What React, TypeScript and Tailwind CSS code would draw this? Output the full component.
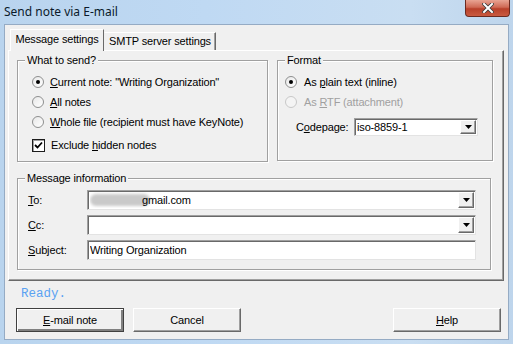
import React from "react";

function Radio({ checked, disabled }: { checked?: boolean; disabled?: boolean }) {
  return (
    <span
      className={`relative inline-flex h-[12px] w-[12px] shrink-0 items-center justify-center rounded-full border ${
        disabled ? "border-[#c8c8c8] bg-[#f4f4f4]" : "border-[#8e8f8f] bg-[linear-gradient(135deg,#e8e8e8,#ffffff)]"
      }`}
    >
      {checked && <span className="h-[4px] w-[4px] rounded-full bg-black" />}
    </span>
  );
}

function Check() {
  return (
    <span className="inline-flex h-[13px] w-[13px] shrink-0 items-center justify-center border border-[#1c1c1c] bg-white shadow-[inset_1px_1px_0_#a0a0a0]">
      <svg width="9" height="9" viewBox="0 0 9 9">
        <path d="M1 4 L3.5 6.5 L8 1.5" stroke="black" strokeWidth="1.8" fill="none" />
      </svg>
    </span>
  );
}

function DropBtn() {
  return (
    <span className="flex h-full w-[16px] shrink-0 items-center justify-center border border-t-white border-l-white border-b-[#696969] border-r-[#696969] bg-[#f0f0f0] shadow-[inset_-1px_-1px_0_#a0a0a0]">
      <svg width="7" height="4" viewBox="0 0 7 4">
        <path d="M0 0 H7 L3.5 4 Z" fill="black" />
      </svg>
    </span>
  );
}

function Field({ children, combo, className }: { children?: React.ReactNode; combo?: boolean; className?: string }) {
  return (
    <div
      className={`flex items-center border border-t-[#a0a0a0] border-l-[#a0a0a0] border-b-[#e3e3e3] border-r-[#e3e3e3] bg-white pl-[2px] shadow-[inset_1px_1px_0_#696969] ${className ?? ""}`}
    >
      <div className="flex flex-1 items-center overflow-hidden whitespace-nowrap">{children}</div>
      {combo && (
        <div className="h-full py-[1px] pr-[1px]">
          <DropBtn />
        </div>
      )}
    </div>
  );
}

function Group({ title, className, children }: { title: string; className?: string; children: React.ReactNode }) {
  return (
    <div className={`relative border border-[#a0a0a0] shadow-[inset_1px_1px_0_#fff,1px_1px_0_#fff] ${className ?? ""}`}>
      <span className="absolute -top-[8px] left-[7px] bg-[#f0f0f0] px-[2px] leading-[14px]">{title}</span>
      {children}
    </div>
  );
}

function Button({ children, isDefault }: { children: React.ReactNode; isDefault?: boolean }) {
  return (
    <button
      className={`flex h-[24px] w-[108px] items-center justify-center border bg-[#f0f0f0] ${
        isDefault
          ? "border-[#404040] shadow-[inset_1px_1px_0_#fff,inset_-2px_-2px_0_#808080]"
          : "border-t-white border-l-white border-b-[#696969] border-r-[#696969] shadow-[inset_-1px_-1px_0_#a0a0a0]"
      }`}
    >
      {children}
    </button>
  );
}

export default function App() {
  return (
    <div className="flex h-[344px] w-[513px] flex-col bg-[linear-gradient(90deg,#b9d4ee_0%,#bfd9f3_40%,#c9def2_80%,#bed5ec_100%)] font-['Liberation_Sans',sans-serif] text-[11px] tracking-[-0.15px] text-black">
      {/* ── Title bar ── */}
      <div className="relative flex h-[24px] shrink-0 items-start">
        <span className="ml-[4px] mt-[3px] font-['Noto_Sans',sans-serif] text-[12px] tracking-normal text-[#0a1a2a]">
          Send note via E-mail
        </span>
        <div className="absolute right-[3px] top-0 flex h-[17px] w-[45px] items-center justify-center rounded-b-[4px] border border-t-0 border-[#6b2a20] bg-[linear-gradient(180deg,#e8a493_0%,#cf6a55_45%,#b8402a_55%,#c95a40_100%)]">
          <svg width="12" height="10" viewBox="0 0 12 10">
            <path d="M2 1 L10 9 M10 1 L2 9" stroke="#3a3a3a" strokeWidth="3.6" strokeLinecap="square" />
            <path d="M2 1 L10 9 M10 1 L2 9" stroke="white" strokeWidth="2" strokeLinecap="square" />
          </svg>
        </div>
      </div>

      {/* ── Client area ── */}
      <div className="mx-[4px] mb-[4px] flex flex-1 flex-col border border-[#95abc4] bg-[#f0f0f0] px-[3px] pt-[4px]">
        {/* Tabs */}
        <div className="flex items-end pl-[2px]">
          <div className="relative z-10 -mb-[1px] flex h-[22px] w-[94px] items-center justify-center border border-b-0 border-t-white border-l-white border-r-[#696969] bg-[#f0f0f0] pb-[2px]">
            Message settings
          </div>
          <div className="flex h-[18px] w-[112px] items-center justify-center border border-b-0 border-t-white border-l-[#f0f0f0] border-r-[#696969] shadow-[inset_-1px_0_0_#a0a0a0]">
            SMTP server settings
          </div>
        </div>

        {/* Tab page */}
        <div className="flex h-[231px] w-[496px] flex-col border border-t-white border-l-white border-b-[#696969] border-r-[#696969] px-[8px] pt-[9px] shadow-[inset_-1px_-1px_0_#a0a0a0]">
          <div className="flex gap-[9px]">
            <Group title="What to send?" className="h-[102px] w-[251px]">
              <div className="flex flex-col pl-[14px] pt-[11px]">
                <label className="flex h-[20px] items-center gap-[6px]">
                  <Radio checked />
                  <span>
                    <u>C</u>urrent note: &quot;Writing Organization&quot;
                  </span>
                </label>
                <label className="flex h-[20px] items-center gap-[6px]">
                  <Radio />
                  <span>
                    <u>A</u>ll notes
                  </span>
                </label>
                <label className="flex h-[20px] items-center gap-[6px]">
                  <Radio />
                  <span>
                    <u>W</u>hole file (recipient must have KeyNote)
                  </span>
                </label>
                <label className="mt-[3px] flex h-[20px] items-center gap-[6px]">
                  <Check />
                  <span>
                    Exclude <u>h</u>idden nodes
                  </span>
                </label>
              </div>
            </Group>

            <Group title="Format" className="h-[101px] w-[216px]">
              <div className="flex flex-col pl-[7px] pt-[11px]">
                <label className="flex h-[20px] items-center gap-[7px]">
                  <Radio checked />
                  <span>
                    As <u>p</u>lain text (inline)
                  </span>
                </label>
                <label className="flex h-[20px] items-center gap-[7px] text-[#a0a0a0]">
                  <Radio disabled />
                  <span>
                    As <u>R</u>TF (attachment)
                  </span>
                </label>
                <div className="mt-[6px] flex items-center pl-[11px]">
                  <span className="w-[58px]">
                    C<u>o</u>depage:
                  </span>
                  <Field combo className="h-[18px] w-[124px]">
                    iso-8859-1
                  </Field>
                </div>
              </div>
            </Group>
          </div>

          <Group title="Message information" className="mt-[16px] h-[92px] w-[474px]">
            <div className="flex flex-col gap-[5px] pl-[10px] pt-[11px]">
              <div className="flex h-[20px] items-center">
                <span className="w-[59px]">
                  <u>T</u>o:
                </span>
                <Field combo className="h-[20px] w-[389px]">
                  <span className="relative flex items-center">
                    <span className="mr-[-8px] h-[12px] w-[60px] rounded-full bg-[#c9c9c9] blur-[1.5px]" />
                    <span className="relative">gmail.com</span>
                  </span>
                </Field>
              </div>
              <div className="flex h-[20px] items-center">
                <span className="w-[59px]">
                  <u>C</u>c:
                </span>
                <Field combo className="h-[20px] w-[389px]" />
              </div>
              <div className="flex h-[20px] items-center">
                <span className="w-[59px]">
                  <u>S</u>ubject:
                </span>
                <Field className="h-[20px] w-[389px]">Writing Organization</Field>
              </div>
            </div>
          </Group>
        </div>

        {/* Status */}
        <div className="mt-[6px] pl-[13px] font-['Liberation_Mono',monospace] text-[12.5px] leading-[14px] tracking-normal text-[#5aa2f2]">
          Ready.
        </div>

        {/* Buttons */}
        <div className="mt-[7px] flex items-center pl-[8px] pr-[4px]">
          <Button isDefault>
            <span>
              <u>E</u>-mail note
            </span>
          </Button>
          <div className="ml-[9px]">
            <Button>Cancel</Button>
          </div>
          <div className="ml-auto">
            <Button>
              <span>
                <u>H</u>elp
              </span>
            </Button>
          </div>
        </div>
      </div>
    </div>
  );
}
